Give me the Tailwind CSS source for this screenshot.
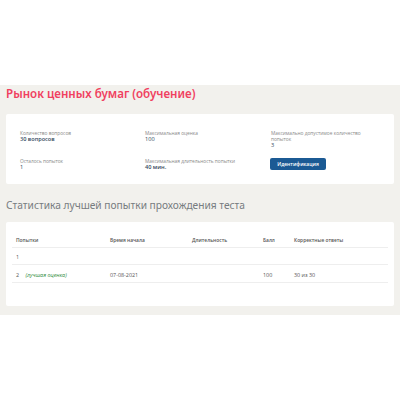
<!DOCTYPE html>
<html lang="ru">
<head>
  <meta charset="UTF-8">
  <title>Рынок ценных бумаг</title>
  <script src="https://cdn.jsdelivr.net/npm/@tailwindcss/browser@4"></script>
</head>
<body class="bg-white font-['Open_Sans',sans-serif]">
  <div class="h-[85px]"></div>
  <div class="bg-[#f2f1ed] h-[230px] px-[6px] overflow-hidden">
    <h1 class="h-[29px] text-[11.6px] leading-[18px] font-semibold text-[#f0405f] font-['Noto_Sans',sans-serif] whitespace-nowrap">Рынок ценных бумаг (обучение)</h1>

    <!-- инфо -->
    <div class="bg-white rounded-[2px] h-[70px] pl-[14px] pt-[16px] grid grid-cols-[125px_126px_108px] content-start">
      <div class="h-[28px] text-[4.8px] leading-[6px]">
        <div class="text-[#888]">Количество вопросов</div>
        <div class="text-[5.6px] font-semibold text-[#34495e]">30 вопросов</div>
      </div>
      <div class="text-[4.8px] leading-[6px]">
        <div class="text-[#888]">Максимальная оценка</div>
        <div class="text-[5.6px] text-[#34495e]">100</div>
      </div>
      <div class="text-[4.8px] leading-[6px]">
        <div class="text-[#888]">Максимально допустимое количество попыток</div>
        <div class="text-[5.6px] text-[#34495e]">3</div>
      </div>
      <div class="text-[4.8px] leading-[6px]">
        <div class="text-[#888]">Осталось попыток</div>
        <div class="text-[5.6px] text-[#34495e]">1</div>
      </div>
      <div class="text-[4.8px] leading-[6px]">
        <div class="text-[#888] whitespace-nowrap">Максимальная длительность попытки</div>
        <div class="text-[5.6px] font-semibold text-[#34495e]">40 мин.</div>
      </div>
      <div>
        <div class="w-[56px] h-[12px] -ml-[1px] bg-[#1b5a94] rounded-[2px] text-white text-[5px] font-semibold leading-[12px] text-center">Идентификация</div>
      </div>
    </div>

    <h2 class="h-[38px] pt-[13px] text-[10.2px] leading-[16px] text-[#777c80] font-['Noto_Sans',sans-serif] whitespace-nowrap">Статистика лучшей попытки прохождения теста</h2>

    <!-- таблица -->
    <div class="bg-white rounded-[2px] h-[84px] px-[6px] pt-[13px]">
      <div class="grid grid-cols-[94px_82px_71px_31px_1fr] pl-[4px] h-[13px] border-b border-[#eeeeee] text-[4.9px] leading-[10px] font-semibold text-[#555]">
        <div>Попытки</div><div>Время начала</div><div>Длительность</div><div>Балл</div><div>Корректные ответы</div>
      </div>
      <div class="grid grid-cols-[94px_82px_71px_31px_1fr] pl-[4px] h-[17px] border-b border-[#eeeeee] text-[5.4px] leading-[18px] text-[#555]">
        <div>1</div>
      </div>
      <div class="grid grid-cols-[94px_82px_71px_31px_1fr] pl-[4px] h-[18px] border-b border-[#eeeeee] text-[5.4px] leading-[20px] text-[#555]">
        <div>2 <span class="ml-[5px] italic text-[#2e8b3a]">(лучшая оценка)</span></div><div>07-08-2021</div><div></div><div>100</div><div>30 из 30</div>
      </div>
    </div>
  </div>
</body>
</html>
